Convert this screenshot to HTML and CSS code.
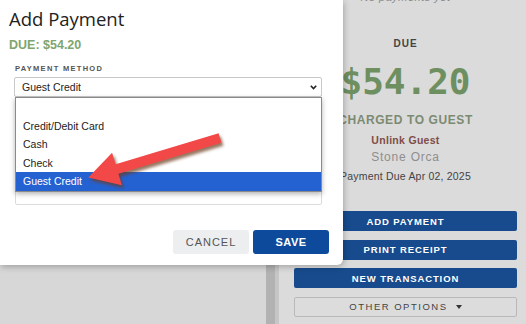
FILE: index.html
```html
<!DOCTYPE html>
<html lang="en">
<head>
  <meta charset="UTF-8">
  <title>Add Payment</title>
  <meta name="viewport" content="width=device-width, initial-scale=1.0">
  <link rel="stylesheet" href="styles.css">
</head>
<body>
  <!-- Page behind the modal -->
  <div class="page">
    <div class="left-pane"></div>
    <div class="divider"></div>
    <aside class="summary">
      <p class="empty-note">No payments yet</p>
      <h4 class="due-label">DUE</h4>
      <div class="due-amount">$54.20</div>
      <div class="charged">CHARGED TO GUEST</div>
      <a href="#" class="unlink">Unlink Guest</a>
      <div class="guest-name">Stone Orca</div>
      <div class="due-date">Payment Due Apr 02, 2025</div>
      <div class="actions">
        <button class="btn-primary">ADD PAYMENT</button>
        <button class="btn-primary">PRINT RECEIPT</button>
        <button class="btn-primary">NEW TRANSACTION</button>
        <button class="btn-outline">OTHER OPTIONS <span class="caret"></span></button>
      </div>
    </aside>
  </div>

  <!-- Add Payment modal -->
  <div class="modal">
    <h2 class="modal-title">Add Payment</h2>
    <div class="modal-due">DUE: $54.20</div>
    <label class="field-label">PAYMENT METHOD</label>
    <div class="select-box">
      <span>Guest Credit</span>
      <svg class="chevron" width="7" height="5" viewBox="0 0 7 5">
        <path d="M0.8 0.8 L3.5 3.6 L6.2 0.8" fill="none" stroke="#222" stroke-width="1.6"/>
      </svg>
    </div>
    <div class="notes-box"></div>

    <!-- open select list -->
    <ul class="select-list">
      <li></li>
      <li>Credit/Debit Card</li>
      <li>Cash</li>
      <li>Check</li>
      <li class="selected">Guest Credit</li>
    </ul>

    <div class="modal-footer">
      <button class="btn-cancel">CANCEL</button>
      <button class="btn-save">SAVE</button>
    </div>

    <!-- annotation arrow -->
    <svg class="pointer-arrow" width="343" height="265" viewBox="0 0 343 265">
      <polygon points="218.6,133.2 221.4,142.8 118.4,173.8 121.9,185.3 88.3,177.6 112.1,152.7 115.6,164.2" fill="#f24848"/>
    </svg>
  </div>
</body>
</html>
```

FILE: styles.css
```css
/* ===== Base ===== */
* {
  margin: 0;
  padding: 0;
  box-sizing: border-box;
}
html, body {
  height: 100%;
  font-family: "Liberation Sans", Arial, sans-serif;
}
body {
  background: #d9d9d9;
  overflow: hidden;
}
button {
  font-family: inherit;
  border: none;
  cursor: pointer;
}

/* ===== Page behind ===== */
.page {
  display: grid;
  grid-template-columns: 266px 13px 1fr;
  height: 100%;
}
.left-pane {
  background: #d7d7d7;
}
.divider {
  background: #b2b2b2;
  border-right: 4px solid #c6c6c6;
}
.summary {
  background: #dbdbdb;
  padding: 0 9px 0 15px;
  text-align: center;
}
.empty-note {
  margin-top: -10px;
  font-size: 11px;
  line-height: 14px;
  font-style: italic;
  color: #8a8a8a;
  letter-spacing: 0.5px;
}
.due-label {
  margin-top: 34px;
  font-size: 10px;
  line-height: 12px;
  letter-spacing: 1px;
  color: #444;
}
.due-amount {
  margin-top: 12px;
  font-family: "DejaVu Sans Mono", monospace;
  font-weight: bold;
  font-size: 36px;
  line-height: 40px;
  color: #6e8f60;
}
.charged {
  margin-top: 11px;
  font-size: 12px;
  font-weight: bold;
  line-height: 14px;
  letter-spacing: 0.6px;
  color: #7b8a72;
  white-space: nowrap;
}
.unlink {
  display: block;
  margin-top: 6px;
  font-size: 10.5px;
  font-weight: bold;
  line-height: 14px;
  letter-spacing: 0.3px;
  color: #7f4d48;
  text-decoration: none;
}
.guest-name {
  margin-top: 3px;
  font-size: 12px;
  line-height: 14px;
  letter-spacing: 0.8px;
  color: #8e8e8e;
}
.due-date {
  margin-top: 5px;
  font-size: 10.5px;
  line-height: 14px;
  letter-spacing: 0.2px;
  color: #444;
  white-space: nowrap;
}
.actions {
  margin-top: 28px;
  display: flex;
  flex-direction: column;
  gap: 8.5px;
}
.btn-primary {
  height: 20px;
  background: #174b8d;
  color: #fff;
  font-size: 9.5px;
  font-weight: bold;
  letter-spacing: 0.9px;
  border-radius: 2px;
}
.btn-outline {
  height: 20px;
  background: #dcdcdc;
  border: 1px solid #b9b9b9;
  color: #444;
  font-size: 9.5px;
  letter-spacing: 1.5px;
  border-radius: 2px;
}
.caret {
  display: inline-block;
  margin-left: 4px;
  border-left: 3px solid transparent;
  border-right: 3px solid transparent;
  border-top: 4px solid #333;
  vertical-align: 1px;
}

/* ===== Modal ===== */
.modal {
  position: absolute;
  top: 0;
  left: 0;
  width: 343px;
  height: 265px;
  background: #fff;
  padding: 7px 14px 0 14px;
  border-radius: 0 0 6px 0;
  box-shadow: 1px 2px 6px rgba(0,0,0,0.25);
}
.modal-title {
  margin-left: -5px;
  font-family: "Open Sans", sans-serif;
  font-weight: normal;
  font-size: 18.5px;
  line-height: 24px;
  color: #222;
}
.modal-due {
  margin-top: 6px;
  margin-left: -5px;
  font-size: 12.5px;
  font-weight: bold;
  line-height: 16px;
  color: #7ea56e;
}
.field-label {
  display: block;
  margin-top: 10.5px;
  padding-left: 1px;
  font-size: 7.5px;
  font-weight: bold;
  line-height: 10px;
  letter-spacing: 1.3px;
  color: #555;
}
.select-box {
  margin-top: 3.5px;
  width: 308px;
  height: 20px;
  padding: 0 4px 0 7px;
  border: 1px solid #c8c8c8;
  border-radius: 2px;
  display: flex;
  align-items: center;
  justify-content: space-between;
  font-size: 10.5px;
  color: #222;
}
.chevron {
  display: block;
}
.notes-box {
  margin-top: 4px;
  margin-left: 1px;
  width: 307px;
  height: 104px;
  border: 1px solid #dcdcdc;
  border-radius: 2px;
}
.select-list {
  position: absolute;
  top: 97px;
  left: 15px;
  width: 307px;
  list-style: none;
  background: #fff;
  border: 1px solid #8a8a8a;
  box-shadow: 0 2px 5px rgba(0,0,0,0.3);
}
.select-list li {
  height: 18.6px;
  line-height: 18.6px;
  padding-left: 7px;
  font-size: 10.5px;
  color: #222;
}
.select-list li.selected {
  background: #2462d2;
  color: #fff;
}
.modal-footer {
  margin-top: 25px;
  display: flex;
  justify-content: flex-end;
  gap: 4px;
}
.btn-cancel,
.btn-save {
  width: 76px;
  height: 24px;
  border-radius: 3px;
  font-size: 11px;
  letter-spacing: 1px;
}
.btn-cancel {
  background: #eceef0;
  color: #555;
}
.btn-save {
  background: #0e4a9b;
  color: #fff;
  font-weight: bold;
  letter-spacing: 0.5px;
}
.pointer-arrow {
  position: absolute;
  top: 0;
  left: 0;
  pointer-events: none;
  filter: drop-shadow(2px 3px 1.5px rgba(110,60,30,0.7));
}
```
